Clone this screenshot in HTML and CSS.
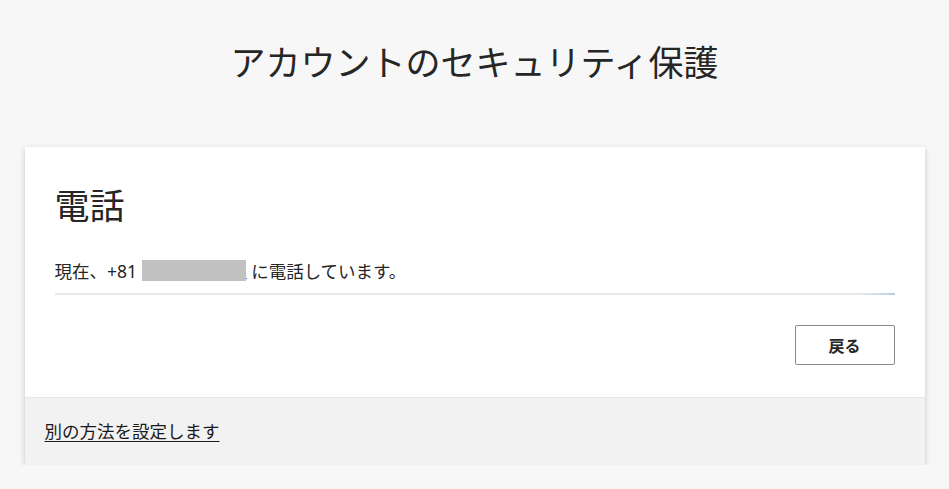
FILE: index.html
```html
<!DOCTYPE html>
<html lang="ja">
<head>
<meta charset="utf-8">
<title>アカウントのセキュリティ保護</title>
<link rel="stylesheet" href="styles.css">
</head>
<body>
<main class="page">
  <h1 class="page-title">アカウントのセキュリティ保護</h1>
  <section class="card">
    <div class="card-body">
      <h2 class="card-title">電話</h2>
      <p class="status">現在、+81 <span class="redacted"></span><span class="dot"></span> に電話しています。</p>
      <div class="progress"></div>
      <div class="actions">
        <button class="btn" type="button">戻る</button>
      </div>
    </div>
    <div class="card-footer">
      <a class="alt-link" href="#">別の方法を設定します</a>
    </div>
  </section>
</main>
</body>
</html>
```

FILE: styles.css
```css
html, body {
  margin: 0;
  padding: 0;
}
body {
  background: #f7f7f7;
  color: #262626;
  font-family: "Segoe UI", "Noto Sans", "Noto Sans CJK JP", sans-serif;
}
.page {
  padding-top: 42px;
  display: flex;
  flex-direction: column;
  align-items: center;
}
.page-title {
  margin: 0 0 63px;
  font-size: 35px;
  line-height: 42px;
  font-weight: 400;
  color: #262626;
  text-align: center;
}
.card {
  width: 900px;
  background: #fff;
  box-shadow: 0 2px 6px rgba(0, 0, 0, 0.2);
}
.card-body {
  padding: 39px 30px 32px;
}
.card-title {
  margin: 0;
  font-size: 35px;
  line-height: 40px;
  font-weight: 400;
  color: #262626;
}
.status {
  margin: 33px 0 0;
  font-size: 17.5px;
  line-height: 25px;
  color: #262626;
  display: flex;
  align-items: center;
  white-space: pre;
}
.redacted {
  display: inline-block;
  width: 104px;
  height: 21px;
  background: #c1c1c1;
  position: relative;
  top: -1px;
}
.dot {
  display: inline-block;
  width: 1px;
  height: 1px;
  background: #4a7ec0;
  align-self: flex-end;
  margin-bottom: 5px;
}
.progress {
  margin-top: 9px;
  height: 2px;
  background: linear-gradient(to right, #e8e8e8 0%, #e8e8e8 96%, #b7cfe4 100%);
}
.actions {
  margin-top: 30px;
  display: flex;
  justify-content: flex-end;
}
.btn {
  width: 100px;
  height: 40px;
  background: #fff;
  border: 1px solid #8a8a8a;
  border-radius: 2px;
  font-family: inherit;
  font-size: 16px;
  font-weight: 700;
  color: #262626;
  padding: 0;
}
.card-footer {
  background: #f2f2f2;
  border-top: 1px solid #e6e6e6;
  padding: 21px 20px 22px;
}
.alt-link {
  font-size: 17.5px;
  line-height: 24px;
  color: #1a1a1a;
  text-decoration: underline;
  text-underline-offset: 3px;
}
```
